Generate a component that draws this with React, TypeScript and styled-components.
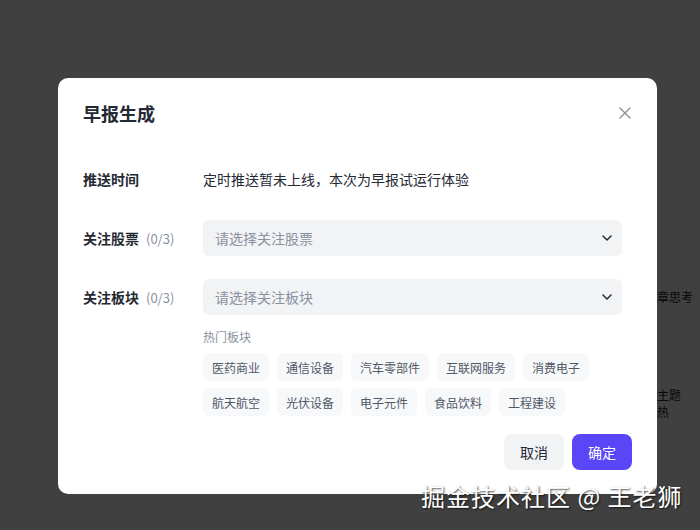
import React from 'react';
import styled, { createGlobalStyle } from 'styled-components';

const GlobalStyle = createGlobalStyle`
  body {
    margin: 0;
    font-family: "Noto Sans CJK SC", "Noto Sans", sans-serif;
  }
`;

const Page = styled.div`
  position: relative;
  width: 700px;
  height: 530px;
  overflow: hidden;
  background: #ffffff;
`;

const PageColumn = styled.div`
  padding: 288px 0 0 633px;
  font-size: 12px;
  line-height: 17px;
  color: #252933;
`;

const PageText = styled.div<{ $width?: number; $gap?: number }>`
  width: ${({ $width }) => ($width ? `${$width}px` : 'auto')};
  margin-top: ${({ $gap }) => $gap ?? 0}px;
  white-space: ${({ $width }) => ($width ? 'normal' : 'nowrap')};
`;

const Overlay = styled.div`
  position: absolute;
  inset: 0;
  background: rgba(0, 0, 0, 0.75);
  padding: 78px 0 0 58px;
`;

const Modal = styled.div`
  width: 599px;
  box-sizing: border-box;
  background: #ffffff;
  border-radius: 10px;
  padding: 23px 25px 24px 25px;
`;

const Header = styled.div`
  display: flex;
  align-items: center;
  justify-content: space-between;
`;

const Title = styled.h2`
  margin: 0;
  font-size: 18px;
  line-height: 24px;
  font-weight: 700;
  color: #252933;
`;

const CloseButton = styled.button`
  display: flex;
  align-items: center;
  justify-content: center;
  width: 14px;
  height: 14px;
  padding: 0;
  border: none;
  background: none;
  color: #86909c;
  cursor: pointer;
`;

const Form = styled.div`
  display: flex;
  flex-direction: column;
  gap: 23px;
  margin-top: 36px;
  padding-right: 10px;
`;

const Row = styled.div`
  display: flex;
  align-items: center;
  min-height: 36px;
`;

const Label = styled.div`
  width: 120px;
  flex-shrink: 0;
  font-size: 14px;
  font-weight: 700;
  color: #252933;
`;

const Count = styled.span`
  margin-left: 7px;
  font-size: 13px;
  font-weight: 400;
  color: #8a919f;
`;

const Value = styled.div`
  font-size: 14px;
  color: #252933;
`;

const Select = styled.div`
  flex: 1;
  height: 36px;
  display: flex;
  align-items: center;
  justify-content: space-between;
  padding: 0 10px 0 12px;
  background: #f2f3f5;
  border-radius: 6px;
  cursor: pointer;
`;

const Placeholder = styled.span`
  font-size: 14px;
  color: #8a919f;
`;

const HotSection = styled.div`
  margin: 14px 10px 0 120px;
`;

const HotTitle = styled.div`
  font-size: 12px;
  line-height: 16px;
  color: #8a919f;
  margin-bottom: 8px;
`;

const TagList = styled.div`
  display: flex;
  flex-wrap: wrap;
  gap: 7px 8px;
`;

const Tag = styled.span`
  display: inline-flex;
  align-items: center;
  height: 28px;
  padding: 0 9px;
  font-size: 12px;
  color: #515767;
  background: #f7f8fa;
  border-radius: 6px;
  cursor: pointer;
`;

const Footer = styled.div`
  display: flex;
  justify-content: flex-end;
  gap: 8px;
  margin-top: 18px;
`;

const Button = styled.button<{ $primary?: boolean }>`
  height: 36px;
  padding: 0 16px;
  border: none;
  border-radius: 8px;
  font-family: inherit;
  font-size: 14px;
  cursor: pointer;
  background: ${({ $primary }) => ($primary ? '#5a46f6' : '#f2f3f5')};
  color: ${({ $primary }) => ($primary ? '#ffffff' : '#252933')};
`;

const Watermark = styled.div`
  position: absolute;
  left: 421px;
  top: 481px;
  font-size: 24px;
  line-height: 30px;
  letter-spacing: 1px;
  color: #ffffff;
  white-space: nowrap;
  text-shadow: 1px 1px 2px rgba(0, 0, 0, 0.7);
`;

const hotSectors = [
  '医药商业', '通信设备', '汽车零部件', '互联网服务', '消费电子',
  '航天航空', '光伏设备', '电子元件', '食品饮料', '工程建设',
];

const Chevron = () => (
  <svg width="10" height="6" viewBox="0 0 10 6" fill="none">
    <path d="M1 1l4 4 4-4" stroke="#252933" strokeWidth="1.5" strokeLinecap="round" strokeLinejoin="round" />
  </svg>
);

export default function App() {
  return (
    <Page>
      <GlobalStyle />
      <PageColumn>
        <PageText>度文章思考</PageText>
        <PageText $width={48} $gap={81}>热门主题讨论热</PageText>
      </PageColumn>

      <Overlay>
        <Modal>
          <Header>
            <Title>早报生成</Title>
            <CloseButton title="关闭">
              <svg width="12" height="12" viewBox="0 0 12 12" fill="none">
                <path d="M1 1l10 10M11 1L1 11" stroke="currentColor" strokeWidth="1.4" strokeLinecap="round" />
              </svg>
            </CloseButton>
          </Header>

          <Form>
            <Row>
              <Label>推送时间</Label>
              <Value>定时推送暂未上线，本次为早报试运行体验</Value>
            </Row>
            <Row>
              <Label>
                关注股票<Count>(0/3)</Count>
              </Label>
              <Select>
                <Placeholder>请选择关注股票</Placeholder>
                <Chevron />
              </Select>
            </Row>
            <Row>
              <Label>
                关注板块<Count>(0/3)</Count>
              </Label>
              <Select>
                <Placeholder>请选择关注板块</Placeholder>
                <Chevron />
              </Select>
            </Row>
          </Form>

          <HotSection>
            <HotTitle>热门板块</HotTitle>
            <TagList>
              {hotSectors.map((name) => (
                <Tag key={name}>{name}</Tag>
              ))}
            </TagList>
          </HotSection>

          <Footer>
            <Button>取消</Button>
            <Button $primary>确定</Button>
          </Footer>
        </Modal>
      </Overlay>

      <Watermark>掘金技术社区 @ 王老狮</Watermark>
    </Page>
  );
}
